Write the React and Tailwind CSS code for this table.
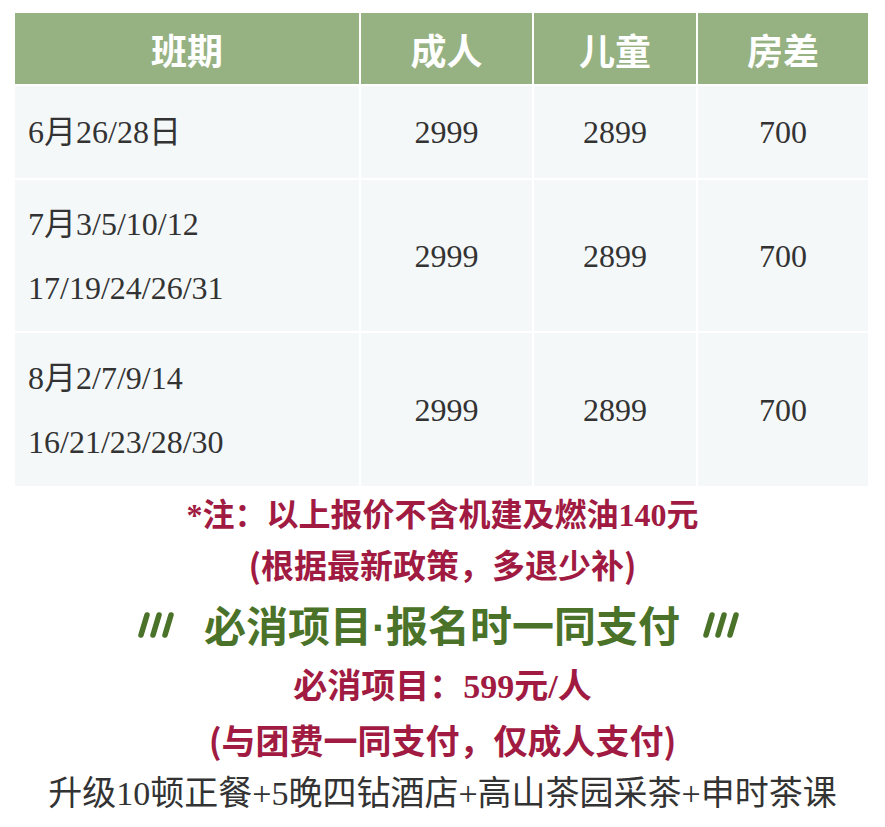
const rows = [
  { dates: ["6月26/28日"], h: "h-[92px]" },
  { dates: ["7月3/5/10/12", "17/19/24/26/31"], h: "h-[151px]" },
  { dates: ["8月2/7/9/14", "16/21/23/28/30"], h: "h-[153px]" },
]

const prices = ["2999", "2899", "700"]

function Slashes({ className = "" }) {
  return (
    <svg width="38" height="28" viewBox="0 0 38 28" className={`shrink-0 ${className}`}>
      <g stroke="#4a7329" strokeWidth="5.5" strokeLinecap="round">
        <line x1="10" y1="4" x2="4" y2="24" />
        <line x1="22" y1="4" x2="16" y2="24" />
        <line x1="34" y1="4" x2="28" y2="24" />
      </g>
    </svg>
  )
}

export default function App() {
  return (
    <div className="w-[885px] h-[827px] bg-white overflow-hidden font-['Liberation_Serif','Noto_Sans_CJK_SC',serif]">
      {/* price table */}
      <div className="ml-[15px] mt-[13px] w-[853px] grid grid-cols-[344px_171px_162px_170px] gap-[2px]">
        {["班期", "成人", "儿童", "房差"].map((t) => (
          <div
            key={t}
            className="h-[71px] bg-[#97b282] flex items-center justify-center text-white text-[36px] font-bold font-['Noto_Sans_CJK_SC',sans-serif]"
          >
            {t}
          </div>
        ))}
        {rows.map((r, i) => (
          <div key={i} className="contents">
            <div className={`${r.h} bg-[#f5f8f9] flex flex-col justify-center pl-[13px] text-[32px] leading-[64px] text-[#333]`}>
              {r.dates.map((d) => (
                <div key={d}>{d}</div>
              ))}
            </div>
            {prices.map((p, j) => (
              <div key={j} className={`${r.h} bg-[#f5f8f9] flex items-center justify-center text-[32px] text-[#333]`}>
                {p}
              </div>
            ))}
          </div>
        ))}
      </div>

      {/* notes */}
      <div className="flex flex-col items-center mt-[4px]">
        <div className="h-[50px] flex items-center text-[32px] font-bold text-[#a01a42]">
          *注：以上报价不含机建及燃油140元
        </div>
        <div className="h-[50px] flex items-center text-[33px] font-bold text-[#a01a42] font-['Noto_Sans_CJK_SC',sans-serif]">
          (根据最新政策，多退少补)
        </div>
        <div className="h-[70px] flex items-center pr-[8px]">
          <Slashes className="mr-[29px]" />
          <span className="text-[42px] font-bold text-[#4a7329] font-['Noto_Sans_CJK_SC',sans-serif]">
            必消项目<span className="font-['Liberation_Sans',sans-serif]">·</span>报名时一同支付
          </span>
          <Slashes className="ml-[22px]" />
        </div>
        <div className="h-[52px] flex items-center text-[34px] font-bold text-[#a01a42]">
          必消项目：599元/人
        </div>
        <div className="h-[54px] flex items-center text-[34px] font-bold text-[#a01a42] font-['Noto_Sans_CJK_SC',sans-serif]">
          (与团费一同支付，仅成人支付)
        </div>
        <div className="h-[54px] flex items-center text-[34px] text-[#333]">
          升级10顿正餐+5晚四钻酒店+高山茶园采茶+申时茶课
        </div>
      </div>
    </div>
  )
}
